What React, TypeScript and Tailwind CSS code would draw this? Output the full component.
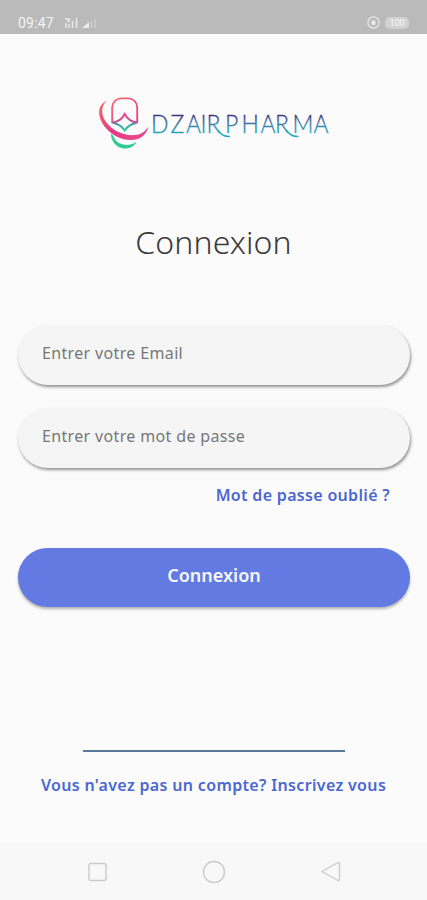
import { useState } from "react";

interface FieldProps {
  type: string;
  placeholder: string;
  value: string;
  onChange: (value: string) => void;
}

function StatusBar() {
  return (
    <div className="flex h-[34px] items-end justify-between bg-[#bababa] pr-[18px] pb-[3px] pl-[18px] text-[#f4f4f4]">
      <div className="flex items-center">
        <span className="w-[46px] font-['Roboto',sans-serif] text-[14px] leading-4 tracking-[0.2px]">09:47</span>
        <svg width="33" height="12" viewBox="0 0 33 12" fill="none" stroke="currentColor">
          <path d="M1 2h5M3 4h3M2 6v5M5 7v4M8.500 4v7M12.500 1v10" strokeWidth="1.600" opacity=".8" />
          <path d="M18 11l7-6v6z" fill="currentColor" stroke="none" opacity=".85" />
          <path d="M27.500 4v7M31 2v9" strokeWidth="1.300" opacity=".4" />
        </svg>
      </div>
      <div className="flex items-center gap-[5px] pb-[2px]">
        <svg width="13" height="13" viewBox="0 0 13 13" fill="none" stroke="currentColor" opacity=".85">
          <circle cx="6.500" cy="6.500" r="5.600" strokeWidth="1.200" />
          <rect x="4.500" y="4.500" width="4" height="4.500" rx="1" fill="currentColor" stroke="none" />
        </svg>
        <span className="flex h-3 w-6 items-center justify-center rounded-[5px] bg-[#d2d2d2] font-['Roboto',sans-serif] text-[9px] leading-3 text-[#f8f8f8]">
          100
        </span>
      </div>
    </div>
  );
}

function Logo() {
  return (
    <svg className="ml-[98px] shrink-0" width="234" height="54" viewBox="98 96 234 54" fill="none">
      <defs>
        <linearGradient id="capsule" x1="112" y1="98" x2="137" y2="124" gradientUnits="userSpaceOnUse">
          <stop offset="0" stopColor="#f26a70" />
          <stop offset="1" stopColor="#e9418b" />
        </linearGradient>
        <linearGradient id="orbit" x1="100" y1="101" x2="145" y2="138" gradientUnits="userSpaceOnUse">
          <stop offset="0" stopColor="#f4686a" />
          <stop offset=".5" stopColor="#e63888" />
          <stop offset="1" stopColor="#ea4c8b" />
        </linearGradient>
        <linearGradient id="star" x1="0" y1="114" x2="0" y2="131" gradientUnits="userSpaceOnUse">
          <stop offset="0" stopColor="#e9418b" />
          <stop offset=".42" stopColor="#c94d93" />
          <stop offset=".65" stopColor="#31a4a4" />
          <stop offset="1" stopColor="#29cd97" />
        </linearGradient>
        <linearGradient id="wordmark" x1="0" y1="115" x2="0" y2="136" gradientUnits="userSpaceOnUse">
          <stop offset="0" stopColor="#3b3583" />
          <stop offset=".45" stopColor="#397faa" />
          <stop offset="1" stopColor="#1fb2c2" />
        </linearGradient>
      </defs>
      <path d="M112.200 123v-16a9 9 0 0 1 9-8.600h7a9 9 0 0 1 9 8.600v16" stroke="url(#capsule)" strokeWidth="1.900" />
      <path
        d="M112.200 122.500Q121 121.500 124.700 114Q128.500 121.500 137.200 122.500Q128.500 124.500 124.700 130.500Q121 124.500 112.200 122.500z"
        stroke="url(#star)"
        strokeWidth="1.900"
      />
      <path
        d="M107 100.800C97 104.500 97 117 104.500 126.500C113 137.500 127 142.500 138 139C143.500 137 147.500 132 148.300 126.500C145.500 131.500 141 134.500 135 135C125 136 113 131.500 106 122C100.500 114 101 105.500 107 100.800z"
        fill="url(#orbit)"
      />
      <path
        d="M111.300 134.300C111.800 142 117 148 125 148.200C130 148.200 134 146 135.800 142.500C129 147.500 116 146 112.800 135.500z"
        fill="#2bc993"
        stroke="#2bc993"
        strokeWidth=".7"
      />
      <g transform="scale(.92 1)">
        <text
          x="164.100 185.300 202.200 217.900 224.500 244.600 262.500 283.200 298.900 317.900 340.800"
          y="133"
          className="font-['Lato',sans-serif] text-[25px] font-light"
          fill="url(#wordmark)"
          stroke="url(#wordmark)"
          strokeWidth=".3"
        >
          DZAIRPHARMA
        </text>
      </g>
      <path d="M217.500 130q5 7 12.500 6.500M286 130q5 7 12.500 6.500" stroke="#25abc0" strokeWidth="1.500" />
    </svg>
  );
}

function Field({ type, placeholder, value, onChange }: FieldProps) {
  return (
    <input
      type={type}
      placeholder={placeholder}
      aria-label={placeholder}
      value={value}
      onChange={(e) => onChange(e.target.value)}
      className="block h-[60px] w-full rounded-full bg-[#f5f5f5] px-6 pb-1 text-[16px] tracking-[0.350px] text-[#555] shadow-[1px_2px_3px_rgba(0,0,0,0.42)] outline-none placeholder:text-[#777]"
    />
  );
}

function NavBar() {
  return (
    <nav className="flex h-[57px] items-center justify-between bg-[#f8f8f8] pr-[86px] pl-[87px] text-[#cbcbcb]">
      <svg width="21" height="22" viewBox="0 0 21 22" fill="none" stroke="currentColor" strokeWidth="1.400">
        <rect x="2" y="2.500" width="17" height="17" rx="2" />
      </svg>
      <svg width="24" height="24" viewBox="0 0 24 24" fill="none" stroke="currentColor" strokeWidth="1.400">
        <circle cx="12" cy="12" r="10.500" />
      </svg>
      <svg width="21" height="22" viewBox="0 0 21 22" fill="none" stroke="currentColor" strokeWidth="1.400" strokeLinejoin="round">
        <path d="M2 10.500 18 1.500q1.500-.5 1.500 1v16q0 1.500-1.500 1z" />
      </svg>
    </nav>
  );
}

export default function App() {
  const [email, setEmail] = useState("");
  const [password, setPassword] = useState("");

  return (
    <div className="flex h-[900px] w-[427px] flex-col overflow-hidden bg-[#fbfbfb] font-['Noto_Sans','Open_Sans',sans-serif]">
      <StatusBar />
      <main className="flex flex-1 flex-col pt-[62px]">
        <Logo />
        <h1 className="mt-[68px] text-center text-[32px] leading-12 font-light tracking-[0.1px] text-[#3c3c3c]">
          Connexion
        </h1>
        <form className="mt-[59px] flex flex-col pr-[17px] pl-[18px]" onSubmit={(e) => e.preventDefault()}>
          <div className="flex flex-col gap-[23px]">
            <Field type="email" placeholder="Entrer votre Email" value={email} onChange={setEmail} />
            <Field type="password" placeholder="Entrer votre mot de passe" value={password} onChange={setPassword} />
          </div>
          <a
            href="#"
            className="mt-[15px] mr-5 self-end text-[16px] leading-6 font-semibold tracking-[0.320px] text-[#4b68d2]"
          >
            Mot de passe oublié ?
          </a>
          <button
            type="submit"
            className="mt-[41px] h-[59px] rounded-full bg-[#627ae2] pb-1 text-[18px] font-semibold text-[#f5f7ff] shadow-[0_2px_3px_rgba(0,0,0,0.3)]"
          >
            Connexion
          </button>
        </form>
        <div className="mt-[143px] ml-[83px] h-[2px] w-[262px] bg-[#5a7ba0]" />
        <a
          href="#"
          className="mt-[21px] text-center text-[16px] leading-6 font-semibold tracking-[0.340px] text-[#4b68d2]"
        >
          Vous n'avez pas un compte? Inscrivez vous
        </a>
      </main>
      <NavBar />
    </div>
  );
}
